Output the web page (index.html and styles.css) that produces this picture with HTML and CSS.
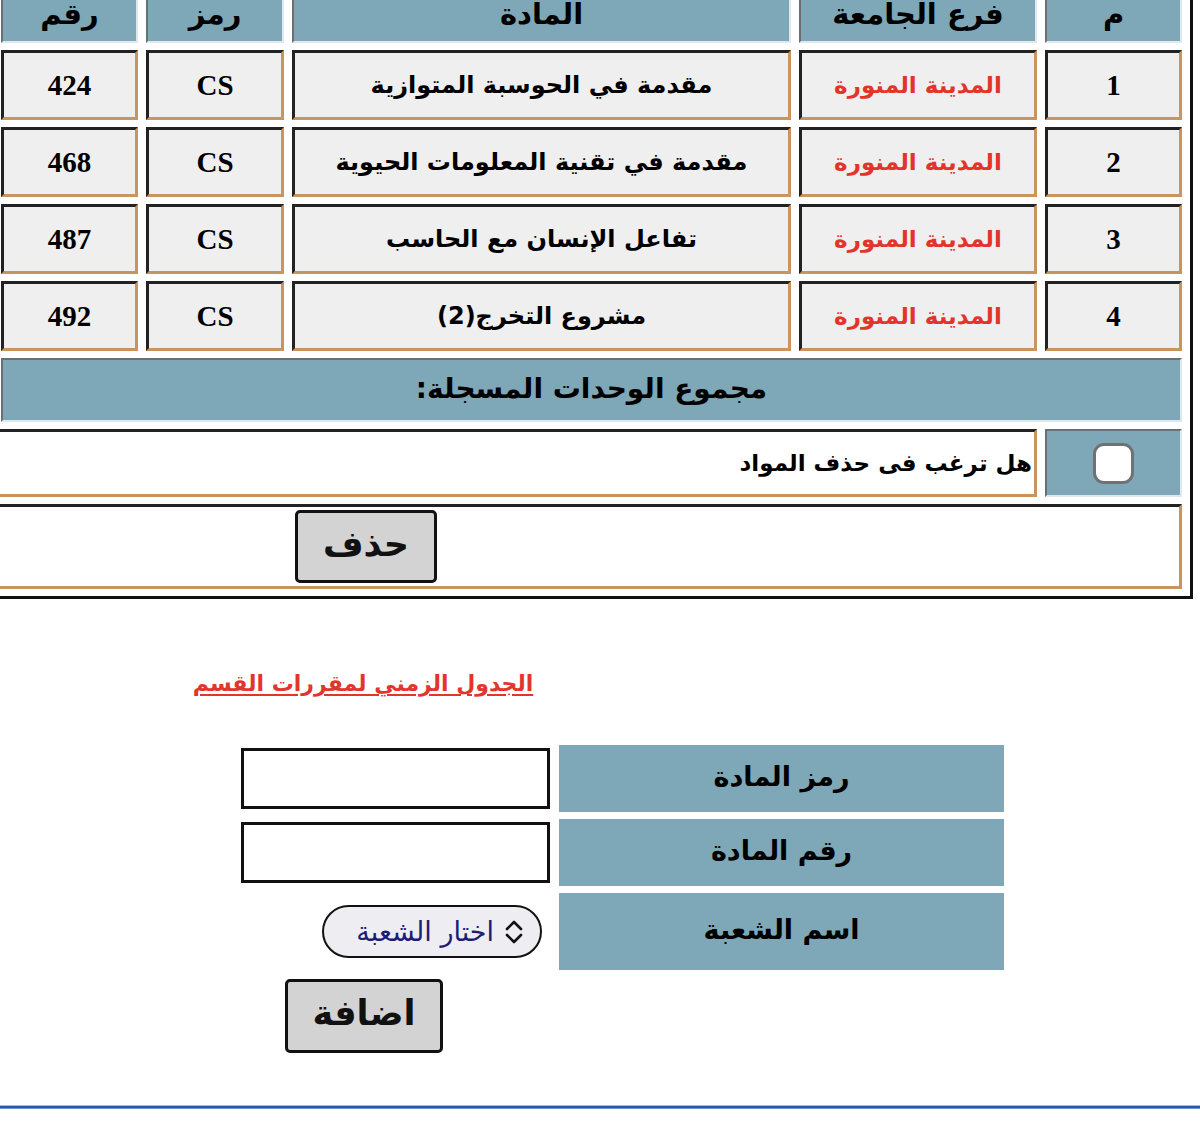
FILE: index.html
```html
<!DOCTYPE html>
<html lang="ar" dir="rtl">
<head>
<meta charset="utf-8">
<title>المقررات</title>
<link rel="stylesheet" href="styles.css">
</head>
<body>
<div class="grid">
  <div class="hcell">م</div>
  <div class="hcell">فرع الجامعة</div>
  <div class="hcell">المادة</div>
  <div class="hcell">رمز</div>
  <div class="hcell">رقم</div>

  <div class="cell num">1</div>
  <div class="cell red">المدينة المنورة</div>
  <div class="cell ar">مقدمة في الحوسبة المتوازية</div>
  <div class="cell num">CS</div>
  <div class="cell num">424</div>

  <div class="cell num">2</div>
  <div class="cell red">المدينة المنورة</div>
  <div class="cell ar">مقدمة في تقنية المعلومات الحيوية</div>
  <div class="cell num">CS</div>
  <div class="cell num">468</div>

  <div class="cell num">3</div>
  <div class="cell red">المدينة المنورة</div>
  <div class="cell ar">تفاعل الإنسان مع الحاسب</div>
  <div class="cell num">CS</div>
  <div class="cell num">487</div>

  <div class="cell num">4</div>
  <div class="cell red">المدينة المنورة</div>
  <div class="cell ar">مشروع التخرج(2)</div>
  <div class="cell num">CS</div>
  <div class="cell num">492</div>

  <div class="total">مجموع الوحدات المسجلة:</div>

  <div class="chkcell"><input type="checkbox" class="chk"></div>
  <div class="question">هل ترغب فى حذف المواد</div>

  <div class="delrow"><button class="btn del">حذف</button></div>
</div>

<div class="linkwrap"><a href="#" class="link">الجدول الزمني لمقررات القسم</a></div>

<div class="form">
  <div class="label">رمز المادة</div>
  <div class="field"><input type="text" class="inp"></div>
  <div class="label">رقم المادة</div>
  <div class="field"><input type="text" class="inp"></div>
  <div class="label">اسم الشعبة</div>
  <div class="field">
    <div class="select">
      <svg width="22" height="28" viewBox="0 0 22 28"><path d="M4 11 L11 4 L18 11 M4 17 L11 24 L18 17" fill="none" stroke="#111" stroke-width="2.6" stroke-linecap="round" stroke-linejoin="round"/></svg>
      <span>اختار الشعبة</span>
    </div>
  </div>
  <div class="spacer"></div>
  <div class="field addf"><button class="btn add">اضافة</button></div>
</div>

<div class="rule"></div>
</body>
</html>
```

FILE: styles.css
```css
html, body {
  margin: 0;
  padding: 0;
  background: #fff;
}
body {
  font-family: "DejaVu Sans", sans-serif;
  color: #000;
  overflow: hidden;
}
.grid {
  box-sizing: border-box;
  width: 1203px;
  margin-right: 7px;
  margin-top: -38px;
  padding: 7px 8px;
  border: 3px solid #111;
  display: grid;
  grid-template-columns: 137px 238px 499px 138px 137px;
  grid-template-rows: 71px 70px 70px 70px 70px 64px 68px 85px;
  gap: 7px 8px;
}
.hcell, .total, .chkcell {
  background: #7ea8b8;
  border-style: solid;
  border-width: 2px;
  border-color: #6a6f72 #dfe9ed #dfe9ed #6a6f72;
  box-sizing: border-box;
}
.hcell {
  display: flex;
  align-items: center;
  justify-content: center;
  font-weight: bold;
  font-size: 29px;
  padding-top: 12px;
}
.cell {
  box-sizing: border-box;
  background: #efefef;
  border-style: solid;
  border-width: 3px;
  border-color: #222 #c9955c #c9955c #222;
  display: flex;
  align-items: center;
  justify-content: center;
  font-weight: bold;
}
.num {
  font-family: "Liberation Serif", serif;
  font-size: 29px;
}
.ar {
  font-size: 24px;
}
.red {
  font-size: 23px;
  color: #e3342b;
}
.total {
  grid-column: 1 / 6;
  display: flex;
  align-items: center;
  justify-content: center;
  font-weight: bold;
  font-size: 28px;
  padding-bottom: 4px;
}
.chkcell {
  display: flex;
  align-items: center;
  justify-content: center;
}
.chk {
  appearance: none;
  -webkit-appearance: none;
  margin: 0;
  width: 41px;
  height: 41px;
  border: 3px solid #6e7275;
  border-radius: 11px;
  background: #fff;
  box-sizing: border-box;
}
.question {
  grid-column: 2 / 6;
  box-sizing: border-box;
  background: #fff;
  border-style: solid;
  border-width: 3px 3px 3px 0;
  border-color: #222 #c9955c #c9955c #222;
  display: flex;
  align-items: center;
  padding-right: 2px;
  font-weight: bold;
  font-size: 23px;
  margin-left: -12px;
}
.delrow {
  grid-column: 1 / 6;
  box-sizing: border-box;
  background: #fff;
  border-style: solid;
  border-width: 3px 3px 3px 0;
  border-color: #222 #c9955c #c9955c #222;
  display: flex;
  align-items: center;
  justify-content: flex-end;
  padding-left: 306px;
  margin-left: -12px;
}
.btn {
  font-family: "DejaVu Sans", sans-serif;
  font-weight: bold;
  background: #d3d3d3;
  border: 3px solid #111;
  border-radius: 5px;
  color: #111;
  padding: 0 0 6px;
  box-sizing: border-box;
}
.del {
  width: 142px;
  height: 73px;
  font-size: 35px;
}
.linkwrap {
  width: 726px;
  margin-right: auto;
  margin-left: 0;
  margin-top: 72px;
  text-align: center;
}
.link {
  color: #e2352c;
  font-weight: bold;
  font-size: 22px;
  text-decoration: underline;
  text-decoration-thickness: 2px;
  text-underline-offset: 3px;
}
.form {
  display: grid;
  grid-template-columns: 445px 309px;
  grid-template-rows: 67px 67px 77px 82px;
  gap: 7px 9px;
  margin-right: 196px;
  margin-top: 49px;
  width: 763px;
}
.label {
  background: #7ea8b8;
  display: flex;
  align-items: center;
  justify-content: center;
  font-weight: bold;
  font-size: 27px;
  padding-bottom: 4px;
  box-sizing: border-box;
}
.field {
  display: flex;
  align-items: center;
}
.inp {
  width: 309px;
  height: 61px;
  box-sizing: border-box;
  border: 3px solid #111;
  background: #fff;
  margin: 0;
  padding: 0;
}
.select {
  box-sizing: border-box;
  width: 220px;
  height: 53px;
  margin-right: 8px;
  border: 2px solid #111;
  border-radius: 27px;
  background: #eeeef2;
  display: flex;
  align-items: center;
  gap: 9px;
  padding-right: 15px;
  color: #1d1d78;
  font-size: 27px;
}
.select svg {
  flex: none;
}
.spacer {
  grid-column: 1;
}
.addf {
  align-items: flex-start;
  padding-top: 2px;
}
.add {
  width: 158px;
  height: 74px;
  font-size: 35px;
  margin-right: 107px;
}
.rule {
  margin-top: 46px;
  height: 2px;
  background: #2b56a8;
  border-top: 1px solid #a9bad6;
  border-bottom: 1px solid #6f95d8;
}
```
